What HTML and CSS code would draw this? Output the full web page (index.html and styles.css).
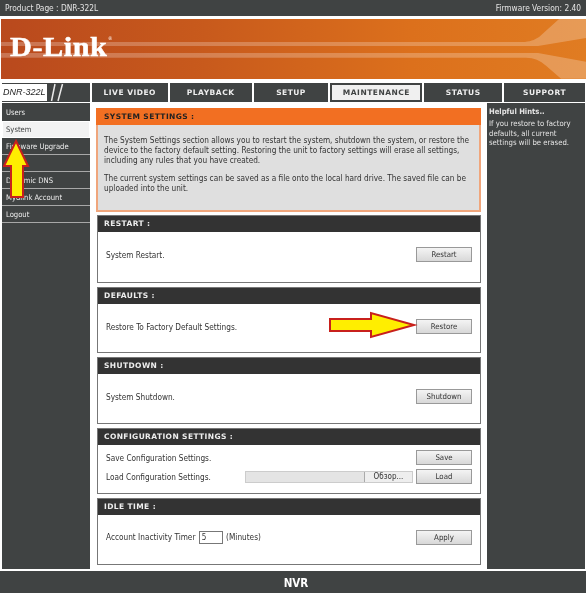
FILE: index.html
```html
<!DOCTYPE html>
<html lang="en">
<head>
    <meta charset="UTF-8">
    <meta name="viewport" content="width=device-width, initial-scale=1.0">
    <title>D-Link NVR</title>
    <link rel="stylesheet" href="styles.css">
</head>
<body>
    <div class="page">
        <div class="topbar">
            <span>Product Page : DNR-322L</span>
            <span>Firmware Version: 2.40</span>
        </div>

        <div class="banner">
            <svg class="banner-art" viewBox="0 0 586 60" preserveAspectRatio="none">
                <path d="M0 23H522C530 23 534 21 539 18L559 0H586V19L538 27H0Z" fill="#fff" opacity="0.24"/>
                <path d="M0 34H538L586 43V60H561L546 47C540 42 534 39 526 39H0Z" fill="#fff" opacity="0.24"/>
            </svg>
            <span class="logo">D-Link</span>
            <span class="logo-mark">®</span>
        </div>

        <div class="nav">
            <div class="brand">
                <span class="brand-name">DNR-322L</span>
                <svg class="brand-slash" width="16" height="19" viewBox="0 0 16 19">
                    <path d="M1.5 18L5 1M8 18L12.5 1" stroke="#e8e8e8" stroke-width="1.5" fill="none"/>
                </svg>
            </div>
            <a class="tab tab-live">LIVE VIDEO</a>
            <a class="tab tab-play">PLAYBACK</a>
            <a class="tab tab-setup">SETUP</a>
            <a class="tab tab-maint active">MAINTENANCE</a>
            <a class="tab tab-status">STATUS</a>
            <a class="tab tab-support">SUPPORT</a>
        </div>

        <div class="main">
            <div class="sidebar">
                <a class="side-item">Users</a>
                <a class="side-item active">System</a>
                <a class="side-item">Firmware Upgrade</a>
                <a class="side-item">&nbsp;</a>
                <a class="side-item">Dynamic DNS</a>
                <a class="side-item">Mydlink Account</a>
                <a class="side-item">Logout</a>
            </div>

            <div class="content">
                <div class="panel panel-intro">
                    <h2 class="panel-head">SYSTEM SETTINGS :</h2>
                    <div class="intro-body">
                        <p>The System Settings section allows you to restart the system, shutdown the system, or restore the device to the factory default setting. Restoring the unit to factory settings will erase all settings, including any rules that you have created.</p>
                        <p>The current system settings can be saved as a file onto the local hard drive. The saved file can be uploaded into the unit.</p>
                    </div>
                </div>

                <div class="panel panel-tall">
                    <h2 class="panel-head">RESTART :</h2>
                    <div class="panel-body">
                        <div class="row"><span>System Restart.</span><button class="btn">Restart</button></div>
                    </div>
                </div>

                <div class="panel panel-short">
                    <h2 class="panel-head">DEFAULTS :</h2>
                    <div class="panel-body">
                        <div class="row"><span>Restore To Factory Default Settings.</span><button class="btn">Restore</button></div>
                    </div>
                </div>

                <div class="panel">
                    <h2 class="panel-head">SHUTDOWN :</h2>
                    <div class="panel-body">
                        <div class="row"><span>System Shutdown.</span><button class="btn">Shutdown</button></div>
                    </div>
                </div>

                <div class="panel panel-short">
                    <h2 class="panel-head">CONFIGURATION SETTINGS :</h2>
                    <div class="panel-body panel-body-stack">
                        <div class="row"><span>Save Configuration Settings.</span><button class="btn">Save</button></div>
                        <div class="row">
                            <span>Load Configuration Settings.</span>
                            <div class="file-load">
                                <div class="file-input"><span class="file-path"></span><span class="file-btn">Обзор...</span></div>
                                <button class="btn">Load</button>
                            </div>
                        </div>
                    </div>
                </div>

                <div class="panel">
                    <h2 class="panel-head">IDLE TIME :</h2>
                    <div class="panel-body">
                        <div class="row">
                            <span class="idle-label">Account Inactivity Timer <input class="idle-input" type="text" value="5"> (Minutes)</span>
                            <button class="btn">Apply</button>
                        </div>
                    </div>
                </div>
            </div>

            <div class="hints">
                <h3>Helpful Hints..</h3>
                <p>If you restore to factory defaults, all current settings will be erased.</p>
            </div>
        </div>

        <div class="footer">NVR</div>

        <!-- annotation arrows drawn over the screenshot -->
        <svg class="arrow arrow-up" width="28" height="62" viewBox="0 0 28 62">
            <path d="M13 2L25 27H20V58H8V27H1Z" fill="#ffee00" stroke="#c8201c" stroke-width="2"/>
        </svg>
        <svg class="arrow arrow-right" width="90" height="28" viewBox="0 0 90 28">
            <path d="M2 8H43V2L86 14L43 26V20H2Z" fill="#ffee00" stroke="#c8201c" stroke-width="2"/>
        </svg>
    </div>
</body>
</html>
```

FILE: styles.css
```css
* {
    box-sizing: border-box;
}
body {
    margin: 0;
    background-color: white;
    font-family: "DejaVu Sans Condensed", "DejaVu Sans", sans-serif;
    font-stretch: condensed;
    font-size: 8.2px;
    color: #333;
}
.page {
    position: relative;
    width: 586px;
    height: 593px;
    overflow: hidden;
    display: flex;
    flex-direction: column;
    filter: blur(0.4px);
}
.topbar {
    height: 16px;
    margin-bottom: 3px;
    padding: 0 5px;
    display: flex;
    justify-content: space-between;
    align-items: center;
    background-color: #404343;
    color: #e4e4e4;
    font-size: 8.3px;
}
.banner {
    position: relative;
    height: 60px;
    margin: 0 0 4px 1px;
    background: linear-gradient(90deg, #b9491d 0%, #c85a1c 35%, #dc701c 70%, #e07c22 100%);
}
.banner-art {
    position: absolute;
    left: 0;
    top: 0;
    width: 100%;
    height: 100%;
}
.logo {
    position: absolute;
    left: 9px;
    top: 10px;
    font-family: "Liberation Serif", serif;
    font-stretch: normal;
    font-size: 28px;
    font-weight: bold;
    line-height: 36px;
    letter-spacing: 0.5px;
    color: white;
    -webkit-text-stroke: 0.5px white;
    transform: scaleX(1.08);
    transform-origin: left center;
}
.logo-mark {
    position: absolute;
    top: 16px;
    left: 107px;
    font-size: 5px;
    line-height: 6px;
    color: white;
}
.nav {
    height: 19px;
    margin-bottom: 0;
    padding: 0 1px 0 2px;
    display: flex;
    gap: 2px;
}
.brand {
    width: 88px;
    display: flex;
    align-items: center;
    gap: 3px;
    background-color: #404343;
}
.brand-name {
    width: 45px;
    height: 17px;
    background-color: white;
    color: #222;
    font-family: "Liberation Sans", sans-serif;
    font-stretch: normal;
    font-style: italic;
    font-size: 9px;
    line-height: 17px;
    padding-left: 1px;
}
.tab {
    display: flex;
    align-items: center;
    justify-content: center;
    background-color: #404343;
    color: #eee;
    font-family: "DejaVu Sans", sans-serif;
    font-stretch: normal;
    font-weight: bold;
    font-size: 7.5px;
    letter-spacing: 0.5px;
}
.tab-live { width: 76px; }
.tab-play { width: 82px; }
.tab-setup { width: 75px; }
.tab-maint { width: 92px; }
.tab-status { width: 78px; }
.tab-support { width: 81px; }
.tab.active {
    background-color: #f0f0f0;
    color: #404343;
    border: 2px solid #404343;
}
.main {
    height: 469px;
    padding-left: 2px;
    padding-right: 1px;
    display: flex;
}
.sidebar {
    width: 88px;
    margin-top: 1px;
    padding-top: 1px;
    background-color: #404343;
    color: #eee;
    font-size: 7.6px;
}
.side-item {
    display: block;
    height: 17px;
    padding-left: 4px;
    line-height: 17px;
    border-bottom: 1px solid #a8a8a8;
}
.side-item:first-child {
    border-bottom: none;
}
.side-item.active {
    background-color: #f2f2f2;
    color: #404343;
    border: 1px solid white;
    padding-left: 3px;
    line-height: 16px;
}
.content {
    width: 394px;
    padding: 6px 5px 0 5px;
    margin-left: 2px;
    display: flex;
    flex-direction: column;
    gap: 4px;
}
.panel {
    height: 67px;
    border: 1px solid #777;
    background-color: white;
}
.panel-tall { height: 68px; }
.panel-short { height: 66px; }
.panel-head {
    margin: 0;
    height: 16px;
    padding-left: 6px;
    background-color: #333;
    color: #eee;
    font-family: "DejaVu Sans", sans-serif;
    font-stretch: normal;
    font-size: 7.5px;
    font-weight: bold;
    letter-spacing: 0.4px;
    line-height: 16px;
}
.panel-intro {
    height: 103px;
    margin-left: -1px;
    border: none;
}
.panel-intro .panel-head {
    height: 17px;
    padding-left: 8px;
    line-height: 17px;
    background-color: #f26f22;
    color: #222;
}
.intro-body {
    height: 87px;
    padding: 10px 2px 0 6px;
    background-color: #dfdfdf;
    border: 2px solid #f0a67c;
    border-top: none;
    line-height: 10px;
}
.intro-body p {
    margin: 0 0 8px;
}
.panel-body {
    height: 50px;
    padding: 0 8px 4px 8px;
    display: flex;
    flex-direction: column;
    justify-content: center;
}
.panel-body-stack {
    gap: 4px;
    padding-bottom: 5px;
}
.row {
    display: flex;
    justify-content: space-between;
    align-items: center;
}
.btn {
    width: 56px;
    height: 15px;
    padding: 0;
    background: linear-gradient(#f4f4f4, #d8d8d8);
    border: 1px solid #999;
    color: #333;
    font-family: inherit;
    font-stretch: condensed;
    font-size: 7.8px;
}
.file-load {
    display: flex;
    align-items: center;
    gap: 3px;
}
.file-input {
    width: 168px;
    height: 12px;
    display: flex;
    background-color: #e4e4e4;
    border: 1px solid #ccc;
}
.file-path {
    flex: 1;
}
.file-btn {
    width: 48px;
    background-color: #eee;
    border-left: 1px solid #aaa;
    font-size: 8px;
    line-height: 10px;
    text-align: center;
}
.idle-input {
    width: 24px;
    height: 13px;
    margin: 0 1px;
    padding: 0 2px;
    border: 1px solid #777;
    font-family: inherit;
    font-stretch: condensed;
    font-size: 8px;
    color: #333;
}
.hints {
    width: 98px;
    margin-left: 1px;
    margin-top: 1px;
    padding: 4px 2px;
    background-color: #404343;
    color: #e4e4e4;
    font-size: 7.7px;
    line-height: 9.5px;
}
.hints h3 {
    margin: 0 0 3px;
    font-size: 7.6px;
    font-weight: bold;
}
.hints p {
    margin: 0;
}
.footer {
    height: 22px;
    margin-top: 2px;
    padding-left: 6px;
    background-color: #404343;
    color: white;
    font-size: 11.5px;
    font-weight: bold;
    line-height: 25px;
    text-align: center;
}
.arrow {
    position: absolute;
}
.arrow-up {
    left: 3px;
    top: 139px;
}
.arrow-right {
    left: 328px;
    top: 311px;
}
```
